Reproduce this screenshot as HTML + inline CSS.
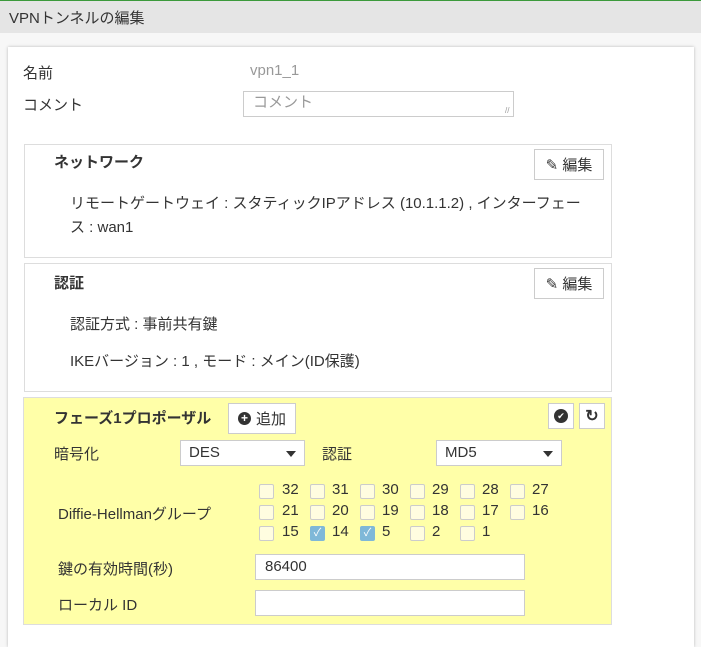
<!DOCTYPE html><html><head><meta charset="utf-8"><style>
body{margin:0;width:701px;height:630px;overflow:hidden;background:#f7f7f7;font-family:"Liberation Sans","Noto Sans CJK JP",sans-serif;font-size:15px;color:#333;position:relative}
.a{position:absolute}
.hdr{left:0;top:0;width:701px;height:33px;background:#e5e5e5;border-top:1px solid #3c9a3c;box-sizing:border-box}
.card{left:8px;top:47px;width:686px;height:600px;background:#fff;box-shadow:0 0 3px rgba(0,0,0,.25)}
.box{border:1px solid #ddd;box-sizing:border-box;background:#fff}
.btn{border:1px solid #ccc;background:#fff;box-sizing:border-box;font-size:15px;display:flex;align-items:center;justify-content:center;gap:5px}
.inp{border:1px solid #ccc;background:#fff;box-sizing:border-box;padding-left:9px;line-height:24px}
.sel{border:1px solid #ccc;background:#fff;box-sizing:border-box;padding-left:8px;line-height:24px}
.sel:after{content:"";position:absolute;right:8px;top:10px;border:5px solid transparent;border-top:6px solid #333;border-bottom:0}
.cb{width:15px;height:15px;border:1px solid #ccc;background:#fffde0;border-radius:2px;box-sizing:border-box}
.cb.on{background:#7fb8d8;border-color:#7fb8d8}
b{font-weight:bold}
</style></head><body>
<div class="a hdr"></div>
<div class="a" style="left:9px;top:7px;font-size:15px">VPNトンネルの編集</div>
<div class="a card"></div>
<div class="a" style="left:23px;top:62px">名前</div>
<div class="a" style="left:250px;top:62px;color:#999">vpn1_1</div>
<div class="a" style="left:23px;top:94px">コメント</div>
<div class="a inp" style="left:243px;top:91px;width:271px;height:26px;color:#999;line-height:22px">コメント</div>
<div class="a" style="left:505px;top:106px;color:#999;font-size:8px">//</div>

<div class="a box" style="left:24px;top:144px;width:588px;height:114px"></div>
<div class="a" style="left:54px;top:151px"><b>ネットワーク</b></div>
<div class="a btn" style="left:534px;top:149px;width:70px;height:31px">✎ 編集</div>
<div class="a" style="left:70px;top:192px;width:512px;line-height:24px">リモートゲートウェイ : スタティックIPアドレス (10.1.1.2) , インターフェース : wan1</div>

<div class="a box" style="left:24px;top:263px;width:588px;height:129px"></div>
<div class="a" style="left:54px;top:272px"><b>認証</b></div>
<div class="a btn" style="left:534px;top:268px;width:70px;height:31px">✎ 編集</div>
<div class="a" style="left:70px;top:313px">認証方式 : 事前共有鍵</div>
<div class="a" style="left:70px;top:350px">IKEバージョン : 1 , モード : メイン(ID保護)</div>

<div class="a box" style="left:23px;top:397px;width:589px;height:228px;background:#ffffa8"></div>
<div class="a" style="left:54px;top:407px"><b>フェーズ1プロポーザル</b></div>
<div class="a btn" style="left:228px;top:403px;width:68px;height:31px"><span style="display:inline-block;width:13px;height:13px;border-radius:50%;background:#333;color:#fff;font-size:12px;line-height:13px;text-align:center;font-weight:bold">+</span>追加</div>
<div class="a btn" style="left:548px;top:403px;width:26px;height:26px"><span style="display:inline-block;width:14px;height:14px;border-radius:50%;background:#333;color:#fff;font-size:9px;line-height:14px;text-align:center">✔</span></div>
<div class="a btn" style="left:579px;top:403px;width:26px;height:26px;font-weight:bold;font-size:16px">↻</div>
<div class="a" style="left:54px;top:443px">暗号化</div>
<div class="a sel" style="left:180px;top:440px;width:125px;height:26px">DES</div>
<div class="a" style="left:322px;top:443px">認証</div>
<div class="a sel" style="left:436px;top:440px;width:126px;height:26px">MD5</div>
<div class="a" style="left:58px;top:503px">Diffie-Hellmanグループ</div>
<div class="a" style="left:259px;top:481px;width:320px">
<div class="a cb" style="left:0;top:3px"></div><div class="a" style="left:23px;top:0">32</div>
<div class="a cb" style="left:51px;top:3px"></div><div class="a" style="left:73px;top:0">31</div>
<div class="a cb" style="left:101px;top:3px"></div><div class="a" style="left:123px;top:0">30</div>
<div class="a cb" style="left:151px;top:3px"></div><div class="a" style="left:173px;top:0">29</div>
<div class="a cb" style="left:201px;top:3px"></div><div class="a" style="left:223px;top:0">28</div>
<div class="a cb" style="left:251px;top:3px"></div><div class="a" style="left:273px;top:0">27</div>
<div class="a cb" style="left:0;top:24px"></div><div class="a" style="left:23px;top:21px">21</div>
<div class="a cb" style="left:51px;top:24px"></div><div class="a" style="left:73px;top:21px">20</div>
<div class="a cb" style="left:101px;top:24px"></div><div class="a" style="left:123px;top:21px">19</div>
<div class="a cb" style="left:151px;top:24px"></div><div class="a" style="left:173px;top:21px">18</div>
<div class="a cb" style="left:201px;top:24px"></div><div class="a" style="left:223px;top:21px">17</div>
<div class="a cb" style="left:251px;top:24px"></div><div class="a" style="left:273px;top:21px">16</div>
<div class="a cb" style="left:0;top:45px"></div><div class="a" style="left:23px;top:42px">15</div>
<div class="a cb on" style="left:51px;top:45px;color:#fff;font-size:11px;line-height:13px;text-align:center">✓</div><div class="a" style="left:73px;top:42px">14</div>
<div class="a cb on" style="left:101px;top:45px;color:#fff;font-size:11px;line-height:13px;text-align:center">✓</div><div class="a" style="left:123px;top:42px">5</div>
<div class="a cb" style="left:151px;top:45px"></div><div class="a" style="left:173px;top:42px">2</div>
<div class="a cb" style="left:201px;top:45px"></div><div class="a" style="left:223px;top:42px">1</div>
</div>
<div class="a" style="left:58px;top:558px">鍵の有効時間(秒)</div>
<div class="a inp" style="left:255px;top:554px;width:270px;height:26px">86400</div>
<div class="a" style="left:58px;top:594px">ローカル ID</div>
<div class="a inp" style="left:255px;top:590px;width:270px;height:26px"></div>
</body></html>
